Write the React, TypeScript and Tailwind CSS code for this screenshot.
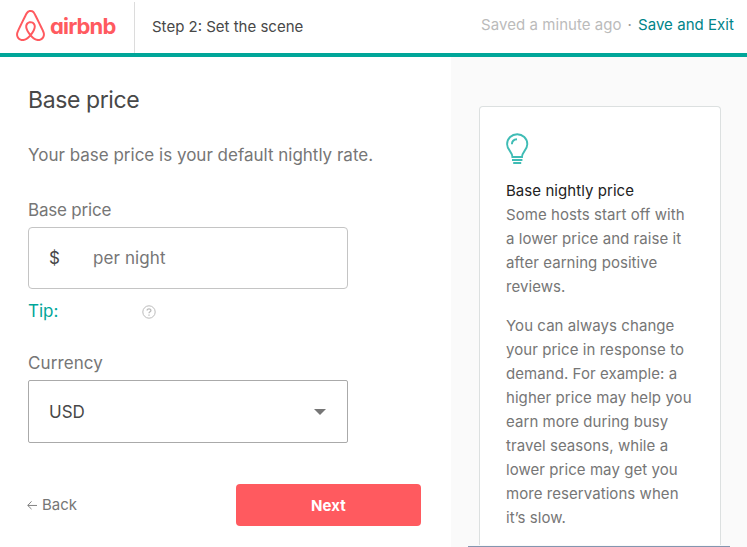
import { SiAirbnb } from "react-icons/si";

function Bulb() {
  return (
    <svg className="block h-8 w-6" viewBox="0 0 24 32" fill="none" stroke="#3fbcb5" strokeWidth="1.9">
      <path d="M6.4 24C6.4 18.8 1.1 16.8 1.1 11.2C1.1 5.4 5.8 1.2 11.2 1.2S21.3 5.4 21.3 11.2C21.3 16.8 16 18.8 16 24Z" />
      <path d="M5.9 11.2C5.9 8.2 8 6.4 11 6.2" />
      <path d="M6 27H16.4M7.2 30.1H15.2" strokeWidth="2" />
    </svg>
  );
}

const intro = ["Some hosts start off with", "a lower price and raise it", "after earning positive", "reviews."];
const advice = [
  "You can always change",
  "your price in response to",
  "demand. For example: a",
  "higher price may help you",
  "earn more during busy",
  "travel seasons, while a",
  "lower price may get you",
  "more reservations when",
  "it’s slow.",
];

export default function App() {
  return (
    <div className="flex h-[547px] w-[747px] flex-col overflow-hidden bg-white font-['Inter',sans-serif] text-[#767676]">
      <header className="flex h-[57px] shrink-0 border-b-4 border-[#00a699] bg-white">
        <div className="mt-0.5 flex h-[51px] w-[135px] border-r border-[#dcdcdc] pl-[15px] text-[#ff5a5f]">
          <SiAirbnb className="mt-2 h-[31px] w-[31px]" />
          <span className="mt-[7px] ml-1 text-[22px] leading-[34px] font-bold tracking-[-0.85px] [font-feature-settings:'cv11']">airbnb</span>
        </div>
        <div className="mt-[15px] ml-[17px] text-[15px] leading-6 whitespace-nowrap text-[#484848]">Step 2: Set the scene</div>
        <div className="mt-[13px] mr-[13px] ml-auto flex text-[15px] leading-6 tracking-[0.05px] whitespace-nowrap">
          <span className="text-[#bbbbbb]">Saved a minute ago</span>
          <span className="mx-1.5 text-[#999999]">·</span>
          <a className="text-[#008489]">Save and Exit</a>
        </div>
      </header>
      <div className="flex min-h-0 flex-1">
        <main className="w-[451px] shrink-0 pl-7">
          <h1 className="mt-[27px] h-8 text-[23px] leading-8 tracking-[-0.4px] text-[#484848]">Base price</h1>
          <p className="mt-[27px] text-[17px] leading-6 whitespace-nowrap">Your base price is your default nightly rate.</p>
          <label className="mt-[31px] block text-[17px] leading-6 tracking-[-0.2px]">Base price</label>
          <div className="mt-[5px] flex h-[62px] w-80 items-center rounded-[4px] border border-[#c4c4c4] pt-0.5 pl-5 text-[17px]">
            <span className="w-11 text-[#484848]">$</span>
            <span className="tracking-[0.1px]">per night</span>
          </div>
          <div className="mt-[10px] flex h-6 items-center text-[17px] leading-6 text-[#00a699]">
            <span className="w-[114px]">Tip:</span>
            <svg className="mt-0.5 h-[14px] w-[14px]" viewBox="0 0 14 14" fill="none" stroke="#bbb" strokeWidth="1">
              <circle cx="7" cy="7" r="6.2" />
              <path d="M5.1 5.5C5.1 3.2 8.9 3.3 8.9 5.4C8.9 6.8 7 6.8 7 8.3M7 9.5V10.7" strokeWidth="1.3" />
            </svg>
          </div>
          <label className="mt-7 block text-[17px] leading-6 tracking-[0.1px]">Currency</label>
          <div className="mt-[5px] flex h-[63px] w-80 items-center justify-between rounded-[2px] border border-[#aaaaaa] pr-[21px] pl-5 text-[17px] text-[#484848]">
            <span className="pt-[3px]">USD</span>
            <svg className="mt-px h-1.5 w-3" viewBox="0 0 12 6" fill="#767676"><path d="M0 0H12L6 6Z" /></svg>
          </div>
          <div className="mt-[41px] flex h-[42px] items-center">
            <svg className="mr-[5px] -ml-px h-[10px] w-[10px]" viewBox="0 0 11 10" fill="none" stroke="#767676"><path d="M11 5.5H1M5 1L.8 5.5L5 9.5" /></svg>
            <span className="w-[194px] text-[15px]">Back</span>
            <button className="h-[42px] w-[185px] rounded-[4px] bg-[#ff5a5f] pt-0.5 text-[15px] font-bold tracking-[0.1px] text-white">Next</button>
          </div>
        </main>
        <aside className="flex-1 bg-[#fafafa] pt-[49px] pl-7">
          <section className="h-[439px] w-[242px] rounded-t-[4px] border border-b-0 border-[#dce0e0] bg-white pt-[26px] pl-[26px] text-[15px] leading-6 tracking-[0.06px] whitespace-nowrap">
            <Bulb />
            <h2 className="mt-[14px] font-normal text-[#222222]">Base nightly price</h2>
            <div>{intro.map((line) => <p key={line}>{line}</p>)}</div>
            <div className="mt-[15px]">{advice.map((line) => <p key={line}>{line}</p>)}</div>
          </section>
          <div className="-ml-[11px] h-[2px] w-[262px] border-b border-[#8496b0]" />
        </aside>
      </div>
    </div>
  );
}
